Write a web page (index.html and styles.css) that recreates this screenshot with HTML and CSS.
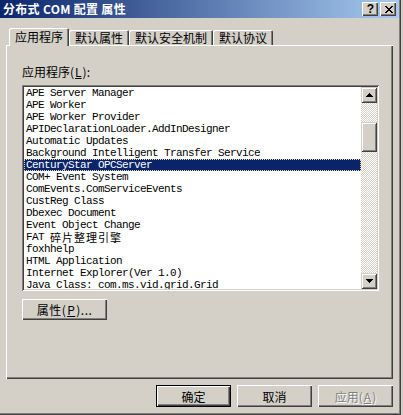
FILE: index.html
```html
<!DOCTYPE html>
<html lang="zh-CN">
<head>
  <meta charset="UTF-8">
  <title>分布式 COM 配置 属性</title>
  <link rel="stylesheet" href="styles.css">
</head>
<body>

  <div class="window">
    <!-- Title bar -->
    <div class="titlebar">
      <span class="title">分布式 COM 配置 属性</span>
      <div class="caption-btns">
        <span class="cap-btn help">?</span>
        <span class="cap-btn close">
          <svg width="8" height="7" viewBox="0 0 8 7"><path d="M0 0h2v1h1v1h2V1h1V0h2v1H7v1H6v1H5v1h1v1h1v1h1v1H6V6H5V5H3v1H2v1H0V6h1V5h1V4h1V3H2V2H1V1H0z" fill="#000"/></svg>
        </span>
      </div>
    </div>

    <div class="content">
      <!-- Tabs -->
      <div class="tabs">
        <div class="tab active">应用程序</div>
        <div class="tab">默认属性</div>
        <div class="tab">默认安全机制</div>
        <div class="tab">默认协议</div>
      </div>

      <div class="panel">
        <div class="field-label">应用程序(<u>L</u>):</div>

        <div class="listbox">
          <ul class="items">
            <li>APE Server Manager</li>
            <li>APE Worker</li>
            <li>APE Worker Provider</li>
            <li>APIDeclarationLoader.AddInDesigner</li>
            <li>Automatic Updates</li>
            <li>Background Intelligent Transfer Service</li>
            <li class="selected">CenturyStar OPCServer</li>
            <li>COM+ Event System</li>
            <li>ComEvents.ComServiceEvents</li>
            <li>CustReg Class</li>
            <li>Dbexec Document</li>
            <li>Event Object Change</li>
            <li>FAT <span class="cjk">碎片整理引擎</span></li>
            <li>foxhhelp</li>
            <li>HTML Application</li>
            <li>Internet Explorer(Ver 1.0)</li>
            <li>Java Class: com.ms.vid.grid.Grid</li>
          </ul>
          <div class="scrollbar">
            <div class="sb-btn">
              <svg width="7" height="4" viewBox="0 0 7 4"><path d="M3 0h1v1h1v1h1v1h1v1H0V3h1V2h1V1h1z" fill="#000"/></svg>
            </div>
            <div class="sb-track"><div class="sb-thumb"></div></div>
            <div class="sb-btn">
              <svg width="7" height="4" viewBox="0 0 7 4"><path d="M0 0h7v1H6v1H5v1H4v1H3V3H2V2H1V1H0z" fill="#000"/></svg>
            </div>
          </div>
        </div>

        <button class="btn props">属性(<u>P</u>)...</button>
      </div>

      <div class="footer">
        <button class="btn default">确定</button>
        <button class="btn">取消</button>
        <button class="btn" disabled>应用(<u>A</u>)</button>
      </div>
    </div>
  </div>

</body>
</html>
```

FILE: styles.css
```css
* { box-sizing: border-box; }
body { margin: 0; background: #d4d0c8; font-family: "Noto Sans CJK SC", sans-serif; font-size: 12px; color: #000; }

.window { width: 401px; height: 415px; background: #d4d0c8; border-right: 1px solid #404040; border-bottom: 1px solid #404040; box-shadow: inset -1px -1px #808080; padding-right: 1px; }

/* title bar */
.titlebar { height: 18px; display: flex; align-items: center; justify-content: space-between; background: linear-gradient(to right, #0a246a, #a6caf0); padding: 0 3px 0 3px; }
.title { color: #fff; font-weight: bold; font-size: 12px; line-height: 18px; letter-spacing: 0.3px; }
.caption-btns { display: flex; gap: 2px; }
.cap-btn { width: 16px; height: 14px; display: flex; align-items: center; justify-content: center; background: #d4d0c8; box-shadow: inset 1px 1px #fff, inset -1px -1px #404040, inset -2px -2px #808080; }
.cap-btn.help { font-family: "Liberation Sans", sans-serif; font-weight: bold; font-size: 12px; line-height: 14px; padding-left: 1px; }
.cap-btn.close svg { display: block; margin-left: 1px; }

.content { padding-left: 6px; }

/* tabs */
.tabs { display: flex; height: 17px; margin-top: 10px; padding-left: 3px; align-items: flex-end; }
.tab { height: 15px; line-height: 15px; padding: 0 6px; background: #d4d0c8; border-radius: 2px 2px 0 0; box-shadow: inset 1px 1px #fff, inset -1px 0 #404040, inset -2px 0 #808080; white-space: nowrap; }
.tab.active { height: 18px; line-height: 14px; padding-top: 2px; margin-bottom: -1px; position: relative; z-index: 1; }

/* tab page */
.panel { width: 387px; height: 334px; padding: 19px 0 0 16px; box-shadow: inset 1px 1px #fff, inset -1px -1px #404040, inset -2px -2px #808080; }
.field-label { height: 16px; line-height: 16px; margin-bottom: 5px; }
.field-label u, .btn u { margin: 0 1px; }

.listbox { width: 357px; height: 206px; padding: 2px; display: flex; background: #fff; box-shadow: inset 1px 1px #808080, inset -1px -1px #fff, inset 2px 2px #404040, inset -2px -2px #d4d0c8; }
.items { flex: 1; margin: 0; padding: 0; list-style: none; overflow: hidden; font-family: "Liberation Mono", monospace; font-size: 11px; letter-spacing: -0.6px; }
.items li { height: 12px; line-height: 12px; padding-left: 2px; white-space: nowrap; }
.items li.selected { background: #0a246a; color: #fff; outline: 1px dotted #e8dca0; outline-offset: -1px; }
.cjk { font-family: "Noto Sans CJK SC", sans-serif; font-size: 11px; letter-spacing: 1px; line-height: 12px; display: inline-block; height: 12px; vertical-align: top; }

.scrollbar { width: 16px; display: flex; flex-direction: column; }
.sb-btn { height: 16px; display: flex; align-items: center; justify-content: center; background: #d4d0c8; box-shadow: inset 1px 1px #d4d0c8, inset -1px -1px #404040, inset 2px 2px #fff, inset -2px -2px #808080; }
.sb-btn svg { display: block; }
.sb-track { flex: 1; background: repeating-conic-gradient(#d4d0c8 0 25%, #fff 0 50%) 0 0 / 2px 2px; }
.sb-thumb { height: 30px; margin-top: 19px; background: #d4d0c8; box-shadow: inset 1px 1px #d4d0c8, inset -1px -1px #404040, inset 2px 2px #fff, inset -2px -2px #808080; }

/* buttons */
.btn { font: inherit; color: #000; background: #d4d0c8; border: none; padding: 0; width: 75px; height: 22px; box-shadow: inset 1px 1px #fff, inset -1px -1px #404040, inset -2px -2px #808080; }
.btn.props { width: 85px; height: 21px; margin-top: 8px; letter-spacing: 0.5px; }
.btn.default { box-shadow: inset 0 0 0 1px #000, inset 2px 2px #fff, inset -2px -2px #404040, inset -3px -3px #808080; }
.btn:disabled { color: #808080; text-shadow: 1px 1px #fff; }

.footer { width: 387px; display: flex; justify-content: flex-end; gap: 6px; margin-top: 6px; }
```
